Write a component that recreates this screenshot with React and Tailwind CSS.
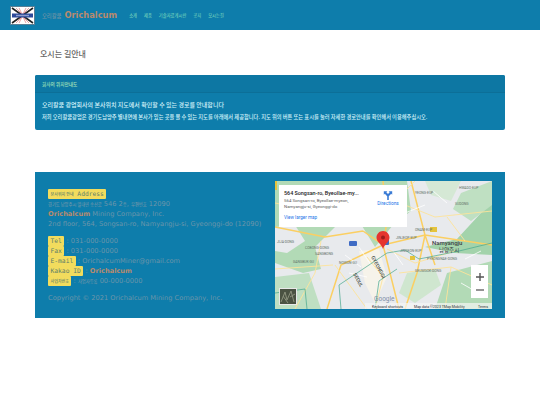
import React from "react";

// 한글은 참고 이미지의 글자 폭에 맞춰 작게 표시
function Ko({ children }) {
	return <span className="font-medium text-[0.64em]" style={{ fontFamily: '"Noto Sans CJK KR", sans-serif' }}>{children}</span>;
}

function Tag({ children }) {
	return (
		<span className="inline-block h-[9.500px] rounded-[1px] bg-[#f2dc5d] px-[2.500px] align-top font-['DejaVu_Sans_Mono',monospace] text-[6.300px] leading-[10px] text-[#5f7f6a]">
			{children}
		</span>
	);
}

function Logo() {
	return (
		<svg width="25" height="19" viewBox="0 0 25 19" className="shrink-0">
			<rect width="25" height="19" fill="#fff" />
			<rect x="0.5" y="0.5" width="24" height="18" fill="none" stroke="#5a7f95" />
			<path d="M2 2L23 17M23 2L2 17" stroke="#222" strokeWidth="1.6" />
			<path d="M6 2L12 8M19 2L13 8M6 17L12 11M19 17L13 11M9 2L12 8M16 2L13 8M9 17L12 11M16 17L13 11" stroke="#e58b8b" strokeWidth="0.8" />
			<rect x="2" y="7.5" width="21" height="4" fill="#2c4a9a" />
			<rect x="6" y="8.8" width="13" height="1.4" fill="#8d9ccb" />
		</svg>
	);
}

function MapView() {
	return (
		<div className="relative h-[128px] w-[217px] shrink-0 overflow-hidden bg-[#e8eaed]">
			<svg width="217" height="128" viewBox="0 0 217 128" className="block">
				<rect width="217" height="128" fill="#e8eaed" />
				<path d="M0 0H132L136 30L118 44L100 66L84 40L60 46L40 66L46 88L28 92L0 82Z" fill="#b2dab6" />
				<path d="M0 46L20 44L30 60L12 72L0 70Z" fill="#e8eaed" />
				<path d="M150 66L182 58L217 20V74L180 72Z" fill="#a3d3ab" />
				<path d="M186 12L217 0V24L196 40L178 28Z" fill="#bfe0c2" />
				<path d="M150 0H186L176 20L156 14Z" fill="#d5e8d5" />
				<path d="M0 96L34 92L46 128H0Z" fill="#bfdfc2" />
				<path d="M172 92L217 80V128H160Z" fill="#b2dab6" />
				<path d="M132 92L160 88L166 104L140 122L124 112Z" fill="#cfe6cf" />
				<path d="M84 70L104 68L112 96L100 122L90 102Z" fill="#f6f3ea" />

				<path d="M88 50L108 64L124 128M108 64L150 54L217 64M108 0L112 40L108 64M108 64L66 84L52 128M0 46L50 56L88 50M136 0L150 54L160 84M150 54L142 92L130 128" fill="none" stroke="#fbcf62" strokeWidth="1.5" />
				<path d="M0 22L40 30L76 22L120 20L160 36L217 30M20 30L70 26L112 40M60 84L92 128M124 92L176 86L217 104M0 88L58 84M140 0L120 20M172 36L190 60M46 60L40 92L20 128M92 76L108 96L100 128M112 68L140 82L180 70M176 86L170 128" fill="none" stroke="#fde39a" strokeWidth="0.9" />
				<path d="M70 74L86 86M84 66L96 84M74 92L92 96M118 70L128 84M158 10L172 22M130 32L150 24M190 78L206 70M186 102L200 110" fill="none" stroke="#ffffff" strokeWidth="0.8" />
				<path d="M66 128L64 104L112 72L130 69L144 78L184 70L217 62M0 112L30 108L32 128M100 128L104 100L122 88" fill="none" stroke="#46a88c" strokeWidth="0.7" />
				<rect x="74" y="60" width="8" height="5" rx="1" fill="#3f6bc4" />
				<rect x="108" y="58" width="6" height="6" rx="1" fill="#3f6bc4" />
				<rect x="155" y="46" width="7" height="5" fill="#e5c33c" />
				<rect x="135" y="75" width="5" height="4" fill="#e5c33c" />
				<rect x="-1" y="0" width="3" height="9" fill="#e5c33c" />
				<path d="M108 50c-3.600 0-6.500 2.900-6.500 6.600 0 4.500 5 6.500 6.500 11.400 1.500-4.900 6.500-6.900 6.500-11.400 0-3.700-2.900-6.600-6.500-6.600z" fill="#e5342f" />
				<circle cx="108" cy="56.500" r="2" fill="#9d1c1c" />

				<g fontFamily="Roboto, sans-serif" fill="#5f6f66" fontSize="3.400">
					<text x="30" y="68">COBONG-DONG</text>
					<text x="2" y="62">JIJA-DONG</text>
					<text x="40" y="74">SANGBONG</text>
					<text x="18" y="82">GANGBUK-GU</text>
					<text x="64" y="83">NOWON-GU</text>
					<text x="121" y="58">JINJEOP-EUP</text>
					<text x="125" y="71">JINGEON-EUP</text>
					<text x="152" y="79">PYEONGNAE-DONG</text>
					<text x="140" y="91">GEUMGOK-DONG</text>
					<text x="184" y="8">HWADO-EUP</text>
					<text x="140" y="13">YEONG-EUP</text>
					<text x="140" y="50">ONAM-EUP</text>
					<text x="180" y="24">SUDONG</text>
				</g>
				<text x="157" y="64" fontFamily="Roboto, sans-serif" fontSize="6" fontWeight="500" fill="#3c4043">Namyangju</text>
				<text x="164" y="71" fontFamily='"Noto Sans CJK KR", sans-serif' fontSize="5.500" fill="#3c4043">남양주시</text>
				<text x="0" y="0" transform="translate(96 76) rotate(62)" fontFamily="Roboto, sans-serif" fontSize="5" fontWeight="500" fill="#4a5048">GYEONGGI</text>
				<text x="0" y="0" transform="translate(78 93) rotate(62)" fontFamily="Roboto, sans-serif" fontSize="5" fontWeight="500" fill="#4a5048">SEOUL</text>
				<text x="99" y="120" fontFamily="Roboto, sans-serif" fontSize="6.500" fill="#7f8fa8">Google</text>
				<rect x="90" y="122" width="127" height="6" fill="#f5f5f5" fillOpacity="0.7" />
				<text x="97" y="127" fontFamily="Roboto, sans-serif" fontSize="3.600" fill="#333">Keyboard shortcuts</text>
				<text x="139" y="127" fontFamily="Roboto, sans-serif" fontSize="3.600" fill="#333">Map data ©2023 TMap Mobility</text>
				<text x="203" y="127" fontFamily="Roboto, sans-serif" fontSize="3.600" fill="#333">Terms</text>
			</svg>

			{/* 정보 카드 */}
			<div className="absolute left-[4px] top-[4px] flex h-[42px] w-[128px] justify-between bg-white px-[5px] pt-[4px] font-['Roboto',sans-serif]">
				<div className="w-[88px]">
					<div className="truncate text-[5.400px] font-medium leading-[8px] text-[#222]">564 Songsan-ro, Byeollae-my...</div>
					<div className="mt-[1px] text-[4.400px] leading-[5.500px] text-[#5b5b5b]">564 Songsan-ro, Byeollae-myeon, Namyangju-si, Gyeonggi-do</div>
					<div className="mt-[6px] text-[4.600px] leading-[6px] text-[#1a73e8]">View larger map</div>
				</div>
				<div className="flex w-[28px] flex-col items-center">
					<svg width="10" height="10" viewBox="0 0 10 10" className="mt-[1px]">
						<path d="M4.200 10V6.200L1.800 3.800L0.800 4.800V1.200H4.400L3.300 2.300L5 4L6.700 2.300L5.600 1.200H9.200V4.800L8.200 3.800L5.800 6.200V10Z" fill="#3a7bd5" />
					</svg>
					<div className="mt-[1px] text-[4.800px] leading-[6px] text-[#1a73e8]">Directions</div>
				</div>
			</div>

			{/* 확대 / 축소 */}
			<div className="absolute left-[196px] top-[84px] flex h-[33px] w-[17px] flex-col items-center justify-center gap-[8px] bg-white">
				<svg width="8" height="8" viewBox="0 0 8 8"><path d="M4 0V8M0 4H8" stroke="#555" strokeWidth="1.400" /></svg>
				<svg width="8" height="2" viewBox="0 0 8 2"><path d="M0 1H8" stroke="#666" strokeWidth="1.400" /></svg>
			</div>

			{/* 위성 보기 */}
			<svg width="18" height="17" viewBox="0 0 18 17" className="absolute bottom-[4px] left-[4px]">
				<rect width="18" height="17" fill="#4a5242" />
				<path d="M2 14L6 4L8 12L12 3L15 14M4 8L9 15M11 9L16 6" stroke="#8b917c" strokeWidth="1" fill="none" />
				<rect x="0.5" y="0.5" width="17" height="16" fill="none" stroke="#e8e8e8" />
			</svg>
		</div>
	);
}

export default function App() {
	return (
		<div className="min-h-[405px] bg-white font-['DejaVu_Sans',sans-serif]">
			{/* 상단 메뉴 */}
			<header className="flex h-[30px] items-center bg-[#0e7dab] pl-[10px]">
				<Logo />
				<a className="ml-[7px] text-[8.300px] font-bold text-[#b98a6d]">
					<span className="font-normal text-[#6e93a6]"><Ko>오리칼쿰</Ko></span> Orichalcum
				</a>
				<nav className="ml-[12px] flex gap-[7px] text-[6.700px] text-[#6fd0bb]">
					<a><Ko>소개</Ko></a>
					<a><Ko>제품</Ko></a>
					<a><Ko>기술자료게시판</Ko></a>
					<a><Ko>공지</Ko></a>
					<a><Ko>오시는길</Ko></a>
				</nav>
			</header>

			<main className="px-[35px]">
				<h1 className="ml-[5px] mt-[13px] text-[12.500px] leading-[20px] text-[#666]"><Ko>오시는 길안내</Ko></h1>

				<section className="mt-[11px] overflow-hidden rounded-[2px] bg-[#0e7dab]">
					<div className="h-[18px] border-b border-[#0c6f98] bg-[#0d77a3] pl-[7px] text-[7.300px] leading-[17px] text-[#a5e3b8]">
						<Ko>회사의 위치안내도</Ko>
					</div>
					<div className="h-[37px] pl-[7px] pt-[5px] text-[#d6f3fa]">
						<h2 className="text-[9.400px] leading-[12px]"><Ko>오리칼쿰 광업회사의 본사위치 지도에서 확인할 수 있는 경로를 안내합니다</Ko></h2>
						<p className="text-[8.200px] leading-[10px]"><Ko>저희 오리칼쿰광업은 경기도남양주 별내면에 본사가 있는 곳을 볼 수 있는 지도를 아래에서 제공합니다. 지도 위의 버튼 또는 표시를 눌러 자세한 경로안내를 확인해서 이용해주십시오.</Ko></p>
					</div>
				</section>

				<footer className="mt-[42px] flex h-[146px] justify-between bg-[#0e7dab] px-[13px] pt-[9px] text-[6.650px] leading-[10px] text-[#6c95aa]">
					<div className="pt-[8px]">
						<div><Tag><Ko>본사위치 안내</Ko> Address</Tag></div>
						<div><Ko>경기도 남양주시 별내면 송산로</Ko> 546 2<Ko>층</Ko>, <Ko>우편번호</Ko> 12090</div>
						<div><b className="text-[#b98a6d]">Orichalcum</b> Mining Company, Inc.</div>
						<div>2nd floor, 564, Songsan-ro, Namyangju-si, Gyeonggi-do (12090)</div>
						<div className="mt-[7px]"><Tag>Tel</Tag> : 031-000-0000</div>
						<div><Tag>Fax</Tag> : 031-000-0000</div>
						<div><Tag>E-mail</Tag> : OrichalcumMiner@gmail.com</div>
						<div><Tag>Kakao ID</Tag> : <b className="text-[#b98a6d]">Orichalcum</b></div>
						<div><Tag><Ko>사업자번호</Ko></Tag> : <Ko>사업자등록</Ko> 00-000-0000</div>
						<div className="mt-[7px]">Copyright © 2021 Orichalcum Mining Company, Inc.</div>
					</div>
					<MapView />
				</footer>
			</main>
		</div>
	);
}
